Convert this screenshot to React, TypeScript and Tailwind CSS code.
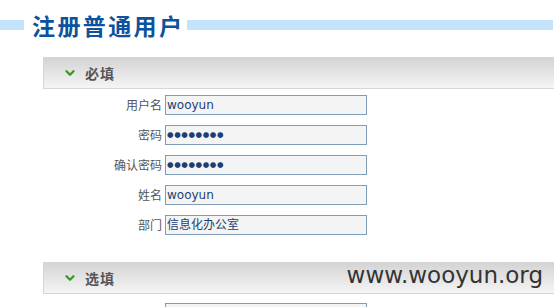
import { ChevronDown } from 'lucide-react';

const cjk = "font-['Noto_Sans_CJK_SC','Noto_Sans',sans-serif]";

const fields = [
  { label: '用户名', value: 'wooyun' },
  { label: '密码', value: '●●●●●●●●', dots: true },
  { label: '确认密码', value: '●●●●●●●●', dots: true },
  { label: '姓名', value: 'wooyun' },
  { label: '部门', value: '信息化办公室' },
];

function SectionHeader({ title }: { title: string }) {
  return (
    <div className="h-[32px] border-y border-l border-[#d6d6d6] bg-gradient-to-b from-[#d4d4d4] to-[#f6f5f6] flex items-center pl-[19px]">
      <ChevronDown size={14} strokeWidth={4} className="text-[#3a9a1e]" />
      <span className={`ml-[8px] text-[14px] font-bold text-[#555] tracking-[1px] ${cjk}`}>{title}</span>
    </div>
  );
}

function Row({ label, value, dots }: { label: string; value: string; dots?: boolean }) {
  return (
    <div className="flex items-center h-[20px]">
      <div className={`w-[122px] text-right text-[12px] text-[#555] pr-[3px] ${cjk}`}>{label}</div>
      <div
        className={`w-[202px] h-[20px] border border-[#7f9db9] bg-[#f4f4f4] flex items-center pl-[1px] text-[#1b3f73] ${
          dots ? "text-[7.5px] tracking-[0.6px] font-['DejaVu_Sans',sans-serif]" : `text-[12px] font-['DejaVu_Sans','Noto_Sans_CJK_SC',sans-serif]`
        }`}
      >
        {value}
      </div>
    </div>
  );
}

export default function App() {
  return (
    <div className="w-[554px] h-[307px] overflow-hidden bg-white relative">
      {/* title */}
      <div className="pt-[8px]">
        <div className="flex items-center h-[34px]">
          <div className="w-[24px] h-[10px] bg-[#c2e3f9]" />
          <h1 className={`ml-[8px] mr-[3px] text-[23px] font-bold text-[#0c529c] tracking-[2.4px] leading-none ${cjk}`}>
            注册普通用户
          </h1>
          <div className="flex-1 h-[10px] bg-[#c2e3f9] mr-[1px]" />
        </div>
      </div>

      <div className="ml-[43px] mt-[15px]">
        <SectionHeader title="必填" />
        <div className="pt-[6px] flex flex-col gap-[10px]">
          {fields.map(f => (
            <Row key={f.label} label={f.label} value={f.value} dots={f.dots} />
          ))}
        </div>

        <div className="mt-[27px]">
          <SectionHeader title="选填" />
          <div className="pt-[9px] flex flex-col gap-[10px]">
            <Row label="联系电话" value="" />
          </div>
        </div>
      </div>

      {/* watermark */}
      <div className="absolute right-[11px] top-[264px] text-[23px] text-[#333] font-['DejaVu_Sans',sans-serif] leading-none">
        www.wooyun.org
      </div>
    </div>
  );
}
